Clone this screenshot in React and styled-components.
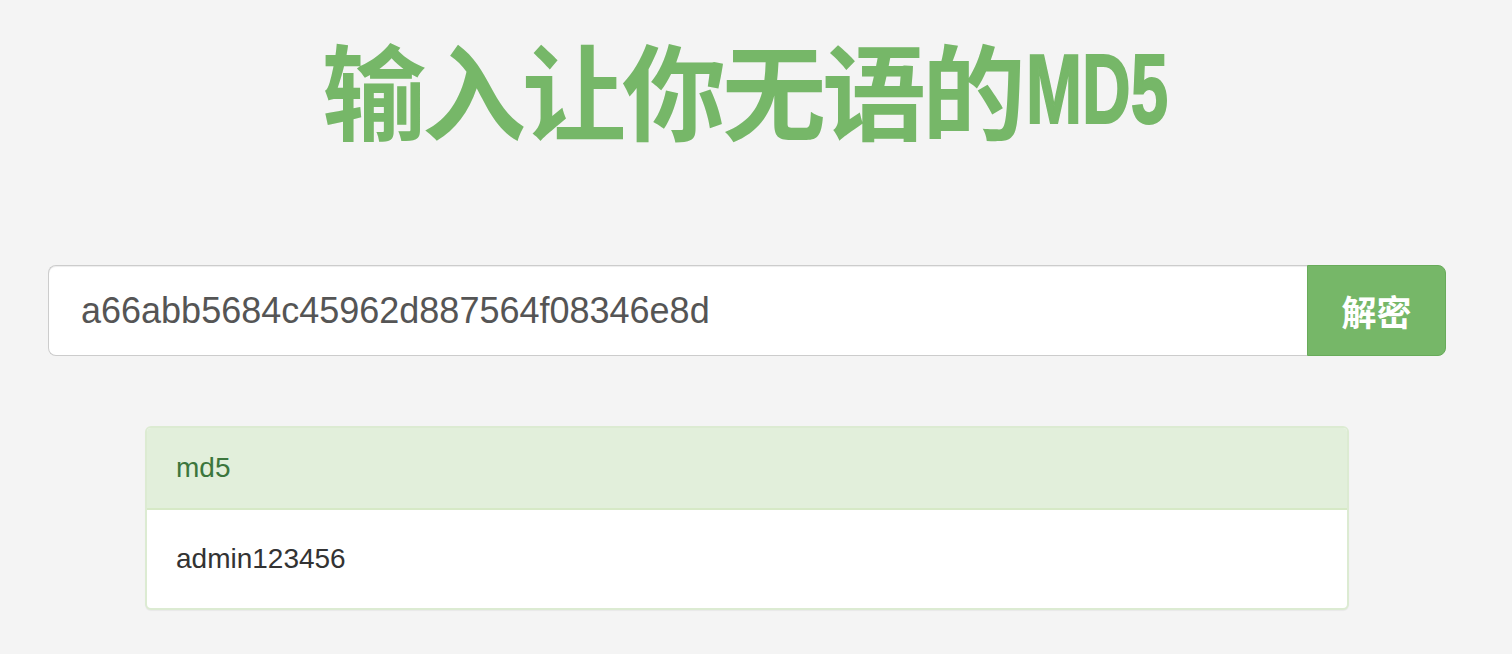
import React, { useState } from "react";
import styled, { createGlobalStyle } from "styled-components";

const GlobalStyle = createGlobalStyle`
  html, body {
    margin: 0;
    padding: 0;
    background: #f4f4f4;
  }
  body {
    font-family: "Liberation Sans", Arial, "Noto Sans CJK SC", sans-serif;
    color: #333;
  }
`;

const Page = styled.div`
  box-sizing: border-box;
  width: 1512px;
  height: 654px;
  padding: 0 66px 0 48px;
  display: flex;
  flex-direction: column;
  overflow: hidden;
`;

const Title = styled.h1`
  margin: 30px 0 0;
  height: 116px;
  display: flex;
  justify-content: center;
  align-items: center;
  color: #76b768;
  font-family: "Noto Sans CJK SC", sans-serif;
  font-weight: 700;
  font-size: 104px;
  letter-spacing: -4px;
  line-height: 116px;
  white-space: nowrap;
`;

/* MD5 in the original uses a narrow heavy face; squeeze a bold sans */
const LatinBox = styled.span`
  display: inline-block;
  width: 146px;
  margin-left: 4px;
  letter-spacing: 0;
`;

const Latin = styled.span`
  display: inline-block;
  font-family: "Liberation Sans", Arial, sans-serif;
  font-weight: bold;
  font-size: 99px;
  transform: scaleX(0.68);
  transform-origin: left center;
  -webkit-text-stroke: 2px #76b768;
  position: relative;
  top: -5px;
`;

const SearchRow = styled.form`
  display: flex;
  margin-top: 119px;
  height: 91px;
`;

const Field = styled.input`
  flex: 1;
  box-sizing: border-box;
  height: 100%;
  border: 1px solid #cccccc;
  border-right: none;
  border-radius: 8px 0 0 8px;
  background: #fff;
  padding: 0 32px;
  font-family: "Liberation Sans", Arial, sans-serif;
  font-size: 36px;
  color: #555;
  box-shadow: inset 0 1px 1px rgba(0, 0, 0, 0.075);
  outline: none;
`;

const Submit = styled.button`
  width: 139px;
  height: 100%;
  border: 1px solid #68ab5a;
  border-radius: 0 8px 8px 0;
  background: #76b768;
  color: #fff;
  font-family: "Noto Sans CJK SC", sans-serif;
  font-weight: 700;
  font-size: 35px;
  cursor: pointer;
`;

const Panel = styled.div`
  margin: 70px 97px 0;
  border: 2px solid #dcebd2;
  border-radius: 6px;
  background: #fff;
  overflow: hidden;
  box-shadow: 0 1px 1px rgba(0, 0, 0, 0.05);
`;

const PanelHead = styled.div`
  height: 80px;
  display: flex;
  align-items: center;
  padding: 0 29px;
  background: #e2efdb;
  border-bottom: 2px solid #d6e9c6;
  color: #3c763d;
  font-size: 28px;
`;

const PanelBody = styled.div`
  height: 98px;
  display: flex;
  align-items: center;
  padding: 0 29px;
  color: #333;
  font-size: 28px;
`;

export default function App() {
  const [hash, setHash] = useState("a66abb5684c45962d887564f08346e8d");
  return (
    <>
      <GlobalStyle />
      <Page>
        <Title>
          输入让你无语的
          <LatinBox>
            <Latin>MD5</Latin>
          </LatinBox>
        </Title>
        <SearchRow onSubmit={(e) => e.preventDefault()}>
          <Field value={hash} onChange={(e) => setHash(e.target.value)} />
          <Submit type="submit">解密</Submit>
        </SearchRow>
        <Panel>
          <PanelHead>md5</PanelHead>
          <PanelBody>admin123456</PanelBody>
        </Panel>
      </Page>
    </>
  );
}
